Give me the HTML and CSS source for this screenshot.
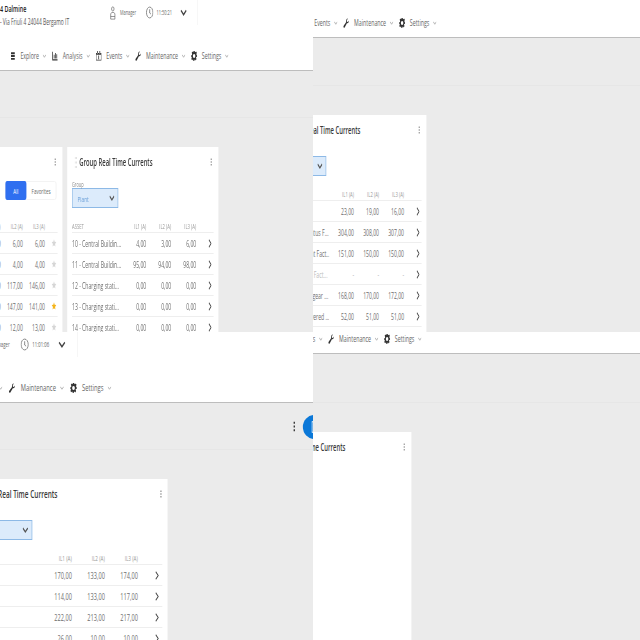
FILE: index.html
```html
<!DOCTYPE html>
<html lang="en">
<head>
<meta charset="utf-8">
<title>Group Real Time Currents</title>
<link rel="stylesheet" href="styles.css">
</head>
<body>
<svg class="sprite" aria-hidden="true">
  <symbol id="i-explore" viewBox="0 0 12 16"><path d="M1 2h10v3H1zM1 6.500h10v3H1zM1 11h10v3H1z" fill="currentColor"/></symbol>
  <symbol id="i-chart" viewBox="0 0 16 16"><path d="M1 1h2v12h12v2H1zM5 6h2v6H5zM8.500 3h2v9h-2zM12 5h2v7h-2z" fill="currentColor"/></symbol>
  <symbol id="i-cal" viewBox="0 0 16 16"><path d="M1 3h14v12H1zM2 6v8h12V6zM4 0h2v4H4zM10 0h2v4h-2zM7 7h2v6H7z" fill="currentColor" fill-rule="evenodd"/></symbol>
  <symbol id="i-wrench" viewBox="0 0 16 16"><path d="M15 4.500a4 4 0 0 1-5.400 3.700L3.700 15a1.900 1.900 0 0 1-2.700-2.700l6.800-5.900A4 4 0 0 1 12 1L9.500 3.500l.6 2.400 2.400.6L15 4z" fill="currentColor"/></symbol>
  <symbol id="i-gear" viewBox="0 0 16 16"><path fill-rule="evenodd" fill="currentColor" d="M6.500 0h3l.4 2.300 1.500.7 2-1.300 2 2.200-1.300 2 .6 1.500L16 8v2l-2.300.4-.6 1.500 1.300 2-2 2.100-2-1.300-1.500.7-.4 2.300h-3L6 15.300l-1.500-.7-2 1.300-2-2.100 1.300-2-.6-1.500L0 10V8l2.200-.6.600-1.500-1.300-2 2-2.200 2 1.300L6.100 2.300zM8 5.700a3.300 3.300 0 1 0 0 6.600 3.300 3.300 0 0 0 0-6.600z" transform="translate(0 -1)"/></symbol>
  <symbol id="i-down" viewBox="0 0 12 8"><path d="M1 1.500l5 5 5-5" fill="none" stroke="currentColor" stroke-width="2"/></symbol>
  <symbol id="i-right" viewBox="0 0 8 12"><path d="M1.500 1l5 5-5 5" fill="none" stroke="currentColor" stroke-width="1.500"/></symbol>
  <symbol id="i-user" viewBox="0 0 16 24"><path d="M8 1.500a3.500 3.500 0 1 1 0 7 3.500 3.500 0 0 1 0-7zM2 22.500v-9l3-2.500h6l3 2.500v9zM2 18h12" fill="none" stroke="currentColor" stroke-width="1.300"/></symbol>
  <symbol id="i-clock" viewBox="0 0 24 24"><circle cx="12" cy="12" r="10" fill="none" stroke="currentColor" stroke-width="1.500"/><path d="M12 6v7l4 2" fill="none" stroke="currentColor" stroke-width="1.500"/></symbol>
  <symbol id="i-kebab" viewBox="0 0 4 16"><path d="M.5 1h3v3h-3zM.5 6.500h3v3h-3zM.5 12h3v3h-3z" fill="currentColor"/></symbol>
  <symbol id="i-star" viewBox="0 0 24 24"><path d="M12 1l3.400 7.400 8 .9-5.900 5.400 1.600 8L12 18.700 4.900 22.700l1.600-8L.6 9.300l8-.9z" fill="currentColor"/></symbol>
  <symbol id="i-handle" viewBox="0 0 10 24"><path d="M1 1h3v4H1zM6 1h3v4H6zM1 10h3v4H1zM6 10h3v4H6zM1 19h3v4H1zM6 19h3v4H6z" fill="currentColor"/></symbol>
  <symbol id="i-doc" viewBox="0 0 16 18"><path d="M2 1h12v16H2zM4 5h8M4 9h8M4 13h8" fill="none" stroke="currentColor" stroke-width="1.600"/></symbol>
</svg>

<main class="board">

  <section class="tile tile-a">
    <div class="sheet">
      <header class="top">
        <div class="top-row">
          <div class="site">
            <strong class="site-name">4 Dalmine</strong>
            <span class="site-addr">- Via Friuli 4 24044 Bergamo IT</span>
          </div>
          <div class="session">
            <svg class="i-user"><use href="#i-user"/></svg><span class="role">Manager</span>
            <svg class="i-clock"><use href="#i-clock"/></svg><span class="time">11:50:21</span>
            <svg class="i-caret"><use href="#i-down"/></svg>
          </div>
        </div>
        <nav class="menu">
          <a class="menu-item"><svg class="i-nav"><use href="#i-explore"/></svg>Explore<svg class="i-small"><use href="#i-down"/></svg></a>
          <a class="menu-item"><svg class="i-nav"><use href="#i-chart"/></svg>Analysis<svg class="i-small"><use href="#i-down"/></svg></a>
          <a class="menu-item"><svg class="i-nav"><use href="#i-cal"/></svg>Events<svg class="i-small"><use href="#i-down"/></svg></a>
          <a class="menu-item"><svg class="i-nav"><use href="#i-wrench"/></svg>Maintenance<svg class="i-small"><use href="#i-down"/></svg></a>
          <a class="menu-item"><svg class="i-nav"><use href="#i-gear"/></svg>Settings<svg class="i-small"><use href="#i-down"/></svg></a>
        </nav>
      </header>
      <div class="band"></div>
      <div class="cards">
        <article class="card card-fav">
          <div class="card-head"><h2 class="card-title">Real Time Currents</h2><svg class="i-kebab"><use href="#i-kebab"/></svg></div>
          <div class="filter filter-toggle">
            <div class="toggle"><span class="toggle-on">All</span><span class="toggle-off">Favorites</span></div>
          </div>
          <div class="table">
            <div class="row row-head"><span class="asset">ASSET</span><span class="num">IL1 (A)</span><span class="num">IL2 (A)</span><span class="num">IL3 (A)</span><span></span></div>
            <div class="row"><span class="asset"></span><span class="num">6,00</span><span class="num">6,00</span><span class="num">6,00</span><svg class="i-star"><use href="#i-star"/></svg></div>
            <div class="row"><span class="asset"></span><span class="num">4,00</span><span class="num">4,00</span><span class="num">4,00</span><svg class="i-star"><use href="#i-star"/></svg></div>
            <div class="row"><span class="asset"></span><span class="num">118,00</span><span class="num">117,00</span><span class="num">146,00</span><svg class="i-star"><use href="#i-star"/></svg></div>
            <div class="row"><span class="asset"></span><span class="num">146,00</span><span class="num">147,00</span><span class="num">141,00</span><svg class="i-star is-on"><use href="#i-star"/></svg></div>
            <div class="row"><span class="asset"></span><span class="num">12,00</span><span class="num">12,00</span><span class="num">13,00</span><svg class="i-star"><use href="#i-star"/></svg></div>
          </div>
        </article>
        <article class="card">
          <div class="card-head"><svg class="i-handle"><use href="#i-handle"/></svg><h2 class="card-title">Group Real Time Currents</h2><svg class="i-kebab"><use href="#i-kebab"/></svg></div>
          <div class="filter">
            <label class="filter-label">Group</label>
            <div class="select"><span>Plant</span><svg class="i-caret"><use href="#i-down"/></svg></div>
          </div>
          <div class="table">
            <div class="row row-head"><span class="asset">ASSET</span><span class="num">IL1 (A)</span><span class="num">IL2 (A)</span><span class="num">IL3 (A)</span><span></span></div>
            <div class="row"><span class="asset">10 - Central Buildin...</span><span class="num">4,00</span><span class="num">3,00</span><span class="num">6,00</span><svg class="i-right"><use href="#i-right"/></svg></div>
            <div class="row"><span class="asset">11 - Central Buildin...</span><span class="num">95,00</span><span class="num">94,00</span><span class="num">98,00</span><svg class="i-right"><use href="#i-right"/></svg></div>
            <div class="row"><span class="asset">12 - Charging stati...</span><span class="num">0,00</span><span class="num">0,00</span><span class="num">0,00</span><svg class="i-right"><use href="#i-right"/></svg></div>
            <div class="row"><span class="asset">13 - Charging stati...</span><span class="num">0,00</span><span class="num">0,00</span><span class="num">0,00</span><svg class="i-right"><use href="#i-right"/></svg></div>
            <div class="row"><span class="asset">14 - Charging stati...</span><span class="num">0,00</span><span class="num">0,00</span><span class="num">0,00</span><svg class="i-right"><use href="#i-right"/></svg></div>
          </div>
        </article>
      </div>
    </div>
  </section>

  <section class="tile tile-b">
    <div class="sheet">
      <header class="top">
        <div class="top-row"></div>
        <nav class="menu">
          <a class="menu-item"><svg class="i-nav"><use href="#i-explore"/></svg>Explore<svg class="i-small"><use href="#i-down"/></svg></a>
          <a class="menu-item"><svg class="i-nav"><use href="#i-chart"/></svg>Analysis<svg class="i-small"><use href="#i-down"/></svg></a>
          <a class="menu-item"><svg class="i-nav"><use href="#i-cal"/></svg>Events<svg class="i-small"><use href="#i-down"/></svg></a>
          <a class="menu-item"><svg class="i-nav"><use href="#i-wrench"/></svg>Maintenance<svg class="i-small"><use href="#i-down"/></svg></a>
          <a class="menu-item"><svg class="i-nav"><use href="#i-gear"/></svg>Settings<svg class="i-small"><use href="#i-down"/></svg></a>
        </nav>
      </header>
      <div class="band"></div>
      <div class="cards">
        <article class="card">
          <div class="card-head"><svg class="i-handle"><use href="#i-handle"/></svg><h2 class="card-title">Group Real Time Currents</h2><svg class="i-kebab"><use href="#i-kebab"/></svg></div>
          <div class="filter">
            <label class="filter-label">Group</label>
            <div class="select"><span>Plant</span><svg class="i-caret"><use href="#i-down"/></svg></div>
          </div>
          <div class="table">
            <div class="row row-head"><span class="asset">ASSET</span><span class="num">IL1 (A)</span><span class="num">IL2 (A)</span><span class="num">IL3 (A)</span><span></span></div>
            <div class="row"><span class="asset"></span><span class="num">23,00</span><span class="num">19,00</span><span class="num">16,00</span><svg class="i-right"><use href="#i-right"/></svg></div>
            <div class="row"><span class="asset">15 - Motor Status F...</span><span class="num">304,00</span><span class="num">308,00</span><span class="num">307,00</span><svg class="i-right"><use href="#i-right"/></svg></div>
            <div class="row"><span class="asset">16 - Main Plant Fact...</span><span class="num">151,00</span><span class="num">150,00</span><span class="num">150,00</span><svg class="i-right"><use href="#i-right"/></svg></div>
            <div class="row row-off"><span class="asset">17 - Aux Plant Fact...</span><span class="num">-</span><span class="num">-</span><span class="num">-</span><svg class="i-right"><use href="#i-right"/></svg></div>
            <div class="row"><span class="asset">18 - LV Switchgear ...</span><span class="num">168,00</span><span class="num">170,00</span><span class="num">172,00</span><svg class="i-right"><use href="#i-right"/></svg></div>
            <div class="row"><span class="asset">19 - Main Powered ...</span><span class="num">52,00</span><span class="num">51,00</span><span class="num">51,00</span><svg class="i-right"><use href="#i-right"/></svg></div>
          </div>
        </article>
      </div>
    </div>
  </section>

  <section class="tile tile-c">
    <div class="sheet">
      <header class="top">
        <div class="top-row">
          <div class="site"></div>
          <div class="session">
            <svg class="i-user"><use href="#i-user"/></svg><span class="role">Manager</span>
            <svg class="i-clock"><use href="#i-clock"/></svg><span class="time">11:01:06</span>
            <svg class="i-caret"><use href="#i-down"/></svg>
          </div>
        </div>
        <nav class="menu">
          <a class="menu-item"><svg class="i-nav"><use href="#i-explore"/></svg>Explore<svg class="i-small"><use href="#i-down"/></svg></a>
          <a class="menu-item"><svg class="i-nav"><use href="#i-chart"/></svg>Analysis<svg class="i-small"><use href="#i-down"/></svg></a>
          <a class="menu-item"><svg class="i-nav"><use href="#i-cal"/></svg>Events<svg class="i-small"><use href="#i-down"/></svg></a>
          <a class="menu-item"><svg class="i-nav"><use href="#i-wrench"/></svg>Maintenance<svg class="i-small"><use href="#i-down"/></svg></a>
          <a class="menu-item"><svg class="i-nav"><use href="#i-gear"/></svg>Settings<svg class="i-small"><use href="#i-down"/></svg></a>
        </nav>
      </header>
      <div class="band">
        <svg class="i-kebab-dark"><use href="#i-kebab"/></svg>
        <span class="fab"><svg class="i-doc"><use href="#i-doc"/></svg></span>
      </div>
      <div class="cards">
        <article class="card">
          <div class="card-head"><svg class="i-handle"><use href="#i-handle"/></svg><h2 class="card-title">Group Real Time Currents</h2><svg class="i-kebab"><use href="#i-kebab"/></svg></div>
          <div class="filter">
            <label class="filter-label">Group</label>
            <div class="select"><span>Plant</span><svg class="i-caret"><use href="#i-down"/></svg></div>
          </div>
          <div class="table">
            <div class="row row-head"><span class="asset">ASSET</span><span class="num">IL1 (A)</span><span class="num">IL2 (A)</span><span class="num">IL3 (A)</span><span></span></div>
            <div class="row"><span class="asset"></span><span class="num">170,00</span><span class="num">133,00</span><span class="num">174,00</span><svg class="i-right"><use href="#i-right"/></svg></div>
            <div class="row"><span class="asset"></span><span class="num">114,00</span><span class="num">133,00</span><span class="num">117,00</span><svg class="i-right"><use href="#i-right"/></svg></div>
            <div class="row"><span class="asset"></span><span class="num">222,00</span><span class="num">213,00</span><span class="num">217,00</span><svg class="i-right"><use href="#i-right"/></svg></div>
            <div class="row"><span class="asset"></span><span class="num">26,00</span><span class="num">10,00</span><span class="num">10,00</span><svg class="i-right"><use href="#i-right"/></svg></div>
          </div>
        </article>
      </div>
    </div>
  </section>

  <section class="tile tile-d">
    <div class="sheet">
      <header class="top">
        <div class="top-row"></div>
        <nav class="menu">
          <a class="menu-item"><svg class="i-nav"><use href="#i-explore"/></svg>Explore<svg class="i-small"><use href="#i-down"/></svg></a>
          <a class="menu-item"><svg class="i-nav"><use href="#i-chart"/></svg>Analysis<svg class="i-small"><use href="#i-down"/></svg></a>
          <a class="menu-item"><svg class="i-nav"><use href="#i-cal"/></svg>Events<svg class="i-small"><use href="#i-down"/></svg></a>
          <a class="menu-item"><svg class="i-nav"><use href="#i-wrench"/></svg>Maintenance<svg class="i-small"><use href="#i-down"/></svg></a>
          <a class="menu-item"><svg class="i-nav"><use href="#i-gear"/></svg>Settings<svg class="i-small"><use href="#i-down"/></svg></a>
        </nav>
      </header>
      <div class="band"></div>
      <div class="cards">
        <article class="card">
          <div class="card-head"><svg class="i-handle"><use href="#i-handle"/></svg><h2 class="card-title">Group Real Time Currents</h2><svg class="i-kebab"><use href="#i-kebab"/></svg></div>
        </article>
      </div>
    </div>
  </section>

</main>
</body>
</html>
```
FILE: styles.css
```css
* { box-sizing: border-box; }

html, body { margin: 0; height: 100%; }

body {
  width: 640px;
  height: 640px;
  overflow: hidden;
  background: #ebebeb;
  font-family: "Open Sans", "Liberation Sans", sans-serif;
  color: #444;
}

.sprite { width: 0; height: 0; position: absolute; }

.board {
  display: grid;
  grid-template-columns: 313px 327px;
  grid-template-rows: 332px 308px;
  width: 640px;
  height: 640px;
}

/* Each tile is one capture of the page, squeezed horizontally and scrolled. */
.tile { overflow: hidden; background: #ebebeb; min-width: 0; min-height: 0; }

.tile-a { --s: .6;  --x: 0px;    --y: 0px;   --band: 47px; --cards: -148px; --card: 252px; }
.tile-b { --s: .6;  --x: -105px; --y: -33px; --band: 48px; --cards: 111.700px; --card: 252px; }
.tile-c { --s: .66; --x: -140px; --y: 0px;   --band: 47px; --cards: 157px;  --card: 309px;
          --select: 96px; --asset: 106px; --col: 50px; --end: 37px; --chev: 21px; --kebab: 0px; }
.tile-d { --s: .6;  --x: -120px; --y: -49px; --band: 49px; --cards: 111.700px; --card: 252px; }

.sheet {
  width: 1400px;
  margin-left: var(--x);
  margin-top: var(--y);
  transform: scaleX(var(--s));
  transform-origin: 0 0;
}

/* header */
.top {
  height: 71px;
  background: #fff;
  border-bottom: 1px solid #bdbdbd;
  display: flex;
  flex-direction: column;
}

.top-row { height: 28px; display: flex; align-items: stretch; }

.site {
  width: 182px;
  padding-top: 2px;
  display: flex;
  flex-direction: column;
  gap: 1px;
}

.site-name { font-size: 9px; line-height: 13px; font-weight: 600; color: #222; }
.site-addr { font-size: 8.200px; line-height: 12px; color: #555; }

.session {
  display: flex;
  align-items: center;
  width: 148px;
  height: 25px;
  border-right: 1px solid #f2f2f2;
}

.i-user { width: 12px; height: 14px; color: #555; margin-right: 6px; flex: none; }
.role { font-size: 6.500px; width: 43px; color: #666; }
.i-clock { width: 13px; height: 13px; color: #555; margin-right: 5px; flex: none; }
.time { font-size: 6.500px; width: 39px; color: #666; }
.i-caret { width: 9px; height: 6px; color: #555; flex: none; }
.session .i-caret { width: 12px; height: 7px; color: #444; }

.menu {
  display: flex;
  align-items: center;
  gap: 9.500px;
  padding: 13px 0 0 16px;
  height: 42px;
}

.menu-item {
  display: flex;
  align-items: center;
  font-size: 8.800px;
  color: #666;
}

.i-nav { width: 11px; height: 10px; color: #333; margin-right: 7px; flex: none; }
.i-small { width: 6px; height: 4px; color: #aaa; margin-left: 6px; flex: none; }

/* toolbar band */
.band {
  height: var(--band);
  border-bottom: 1px solid #e6e6e6;
  display: flex;
  align-items: flex-start;
  padding: 12px 0 0 655px;
}

.i-kebab-dark { width: 6px; height: 11px; color: #333; margin: 6px 10px 0 0; flex: none; }

.fab {
  width: 35px;
  height: 24px;
  border-radius: 50%;
  background: #0b78d8;
  display: flex;
  align-items: center;
  justify-content: center;
  color: #fff;
}

.i-doc { width: 14px; height: 12px; }

/* cards */
.cards {
  display: flex;
  gap: 8px;
  margin-top: 29px;
  margin-left: var(--cards);
}

.card {
  width: var(--card);
  height: 400px;
  background: #fff;
  padding: 0 8px;
  flex: none;
}

.card-head {
  height: 30px;
  display: flex;
  align-items: center;
  gap: 3px;
  padding-right: var(--kebab, 2px);
}

.card-title { margin: 0; font-size: 9.800px; font-weight: 600; color: #3a3a3a; flex: 1; }
.i-handle { width: 5px; height: 13px; color: #dcdcdc; margin-left: 4px; flex: none; }
.i-kebab { width: 4px; height: 8px; color: #777; flex: none; }

.filter { height: 43px; padding-top: 5px; }
.filter-label { display: block; font-size: 6.500px; line-height: 6px; color: #888; }

.select {
  width: var(--select, 77px);
  height: 20px;
  padding: 0 5px 0 8px;
  background: #dcebfb;
  border: 1px solid #8db9e6;
  display: flex;
  align-items: center;
  justify-content: space-between;
  font-size: 8px;
  color: #6a9fd8;
}

.filter-toggle { padding: 4px 2px 0 0; display: flex; justify-content: flex-end; }
.toggle { display: flex; height: 19px; border: 1px solid #f0f0f0; border-radius: 3px; font-size: 7.500px; }
.toggle-on { width: 35px; margin: -1px 0 -1px -1px; background: #2f6ff0; color: #fff; border-radius: 3px; display: flex; align-items: center; justify-content: center; }
.toggle-off { width: 49px; display: flex; align-items: center; justify-content: center; color: #666; }

.table { display: flex; flex-direction: column; }

.row {
  display: grid;
  grid-template-columns: var(--asset, 82px) repeat(3, var(--col, 41.700px)) var(--end, 30px);
  align-items: center;
  height: 21px;
  border-bottom: 1px solid #eee;
  font-size: 8.500px;
  color: #6e6e6e;
}

.row-head {
  height: 13px;
  font-size: 7px;
  color: #999;
}

.row-off { color: #bbb; }

.asset { white-space: nowrap; overflow: hidden; }
.num { text-align: right; white-space: nowrap; }

.i-right { width: 6px; height: 9px; color: #444; justify-self: center; margin-left: var(--chev, 16px); }

.card-fav .row { grid-template-columns: 104px repeat(3, 37px) 21px; }
.i-star { width: 12px; height: 8px; color: #d6d6d6; justify-self: end; }
.i-star.is-on { color: #f4b41a; }
```
